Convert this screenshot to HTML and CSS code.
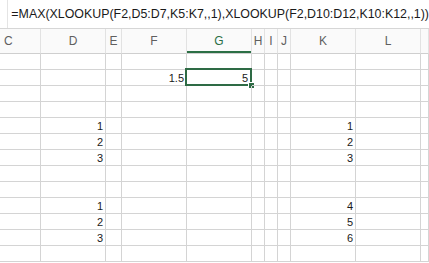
FILE: index.html
```html
<!DOCTYPE html>
<html lang="en">
<head>
    <meta charset="UTF-8">
    <title>Sheet</title>
    <link rel="stylesheet" href="styles.css">
</head>
<body>
    <div class="formula-bar">
        <span class="fx"></span>
        <span class="formula">=MAX(XLOOKUP(F2,D5:D7,K5:K7,,1),XLOOKUP(F2,D10:D12,K10:K12,,1))</span>
    </div>
    <div class="sheet">
        <div class="head first">C</div><div class="head">D</div><div class="head">E</div><div class="head">F</div><div class="head active">G</div><div class="head">H</div><div class="head">I</div><div class="head">J</div><div class="head">K</div><div class="head">L</div><div class="head"></div>

        <div class="cell"></div><div class="cell"></div><div class="cell"></div><div class="cell"></div><div class="cell"></div><div class="cell"></div><div class="cell"></div><div class="cell"></div><div class="cell"></div><div class="cell"></div><div class="cell"></div>

        <div class="cell"></div><div class="cell"></div><div class="cell"></div><div class="cell">1.5</div><div class="cell selected">5<span class="sel-box"></span><span class="handle"></span></div><div class="cell"></div><div class="cell"></div><div class="cell"></div><div class="cell"></div><div class="cell"></div><div class="cell"></div>

        <div class="cell"></div><div class="cell"></div><div class="cell"></div><div class="cell"></div><div class="cell"></div><div class="cell"></div><div class="cell"></div><div class="cell"></div><div class="cell"></div><div class="cell"></div><div class="cell"></div>
        <div class="cell"></div><div class="cell"></div><div class="cell"></div><div class="cell"></div><div class="cell"></div><div class="cell"></div><div class="cell"></div><div class="cell"></div><div class="cell"></div><div class="cell"></div><div class="cell"></div>

        <div class="cell"></div><div class="cell">1</div><div class="cell"></div><div class="cell"></div><div class="cell"></div><div class="cell"></div><div class="cell"></div><div class="cell"></div><div class="cell">1</div><div class="cell"></div><div class="cell"></div>
        <div class="cell"></div><div class="cell">2</div><div class="cell"></div><div class="cell"></div><div class="cell"></div><div class="cell"></div><div class="cell"></div><div class="cell"></div><div class="cell">2</div><div class="cell"></div><div class="cell"></div>
        <div class="cell"></div><div class="cell">3</div><div class="cell"></div><div class="cell"></div><div class="cell"></div><div class="cell"></div><div class="cell"></div><div class="cell"></div><div class="cell">3</div><div class="cell"></div><div class="cell"></div>

        <div class="cell"></div><div class="cell"></div><div class="cell"></div><div class="cell"></div><div class="cell"></div><div class="cell"></div><div class="cell"></div><div class="cell"></div><div class="cell"></div><div class="cell"></div><div class="cell"></div>
        <div class="cell"></div><div class="cell"></div><div class="cell"></div><div class="cell"></div><div class="cell"></div><div class="cell"></div><div class="cell"></div><div class="cell"></div><div class="cell"></div><div class="cell"></div><div class="cell"></div>

        <div class="cell"></div><div class="cell">1</div><div class="cell"></div><div class="cell"></div><div class="cell"></div><div class="cell"></div><div class="cell"></div><div class="cell"></div><div class="cell">4</div><div class="cell"></div><div class="cell"></div>
        <div class="cell"></div><div class="cell">2</div><div class="cell"></div><div class="cell"></div><div class="cell"></div><div class="cell"></div><div class="cell"></div><div class="cell"></div><div class="cell">5</div><div class="cell"></div><div class="cell"></div>
        <div class="cell"></div><div class="cell">3</div><div class="cell"></div><div class="cell"></div><div class="cell"></div><div class="cell"></div><div class="cell"></div><div class="cell"></div><div class="cell">6</div><div class="cell"></div><div class="cell"></div>

        <div class="cell"></div><div class="cell"></div><div class="cell"></div><div class="cell"></div><div class="cell"></div><div class="cell"></div><div class="cell"></div><div class="cell"></div><div class="cell"></div><div class="cell"></div><div class="cell"></div>
    </div>
</body>
</html>
```

FILE: styles.css
```css
body {
    margin: 0;
    width: 429px;
    height: 263px;
    overflow: hidden;
    background-color: #ffffff;
    font-family: "Liberation Sans", Arial, sans-serif;
    color: #1f1f1f;
}
.formula-bar {
    display: flex;
    align-items: center;
    height: 28px;
    border-bottom: 1px solid #d6d6d6;
}
.fx {
    width: 9px;
    height: 28px;
    border-right: 1px solid #e4e4e4;
    box-sizing: border-box;
}
.formula {
    padding-left: 3px;
    font-size: 12.4px;
    color: #1a1a1a;
    white-space: nowrap;
}
.sheet {
    display: grid;
    grid-template-columns: 41px 65px 16px 65px 65px 13px 13px 13px 65px 65px 8px;
    grid-template-rows: 25px;
    grid-auto-rows: 16px;
}
.head {
    box-sizing: border-box;
    border-right: 1px solid #e2e2e2;
    border-bottom: 1px solid #cfcfcf;
    background-color: #fafafa;
    display: flex;
    align-items: center;
    justify-content: center;
    font-size: 12px;
    color: #5f5f5f;
}
.head.first {
    justify-content: flex-start;
    padding-left: 4px;
}
.head.active {
    color: #2b6f45;
    box-shadow: inset 0 -2px 0 #2b6f45;
}
.cell {
    position: relative;
    box-sizing: border-box;
    border-right: 1px solid #d4d4d4;
    border-bottom: 1px solid #d4d4d4;
    font-size: 11px;
    line-height: 16px;
    text-align: right;
    padding-right: 2px;
    color: #1a1a1a;
}
.cell.selected {
    padding-right: 3px;
}
.sel-box {
    position: absolute;
    left: -2px;
    top: -2px;
    width: 67px;
    height: 18px;
    border: 2px solid #2e6b45;
    box-sizing: border-box;
}
.handle {
    position: absolute;
    right: -4px;
    bottom: -4px;
    width: 5px;
    height: 5px;
    background-color: #2e6b45;
    border: 1px solid #ffffff;
}
```
